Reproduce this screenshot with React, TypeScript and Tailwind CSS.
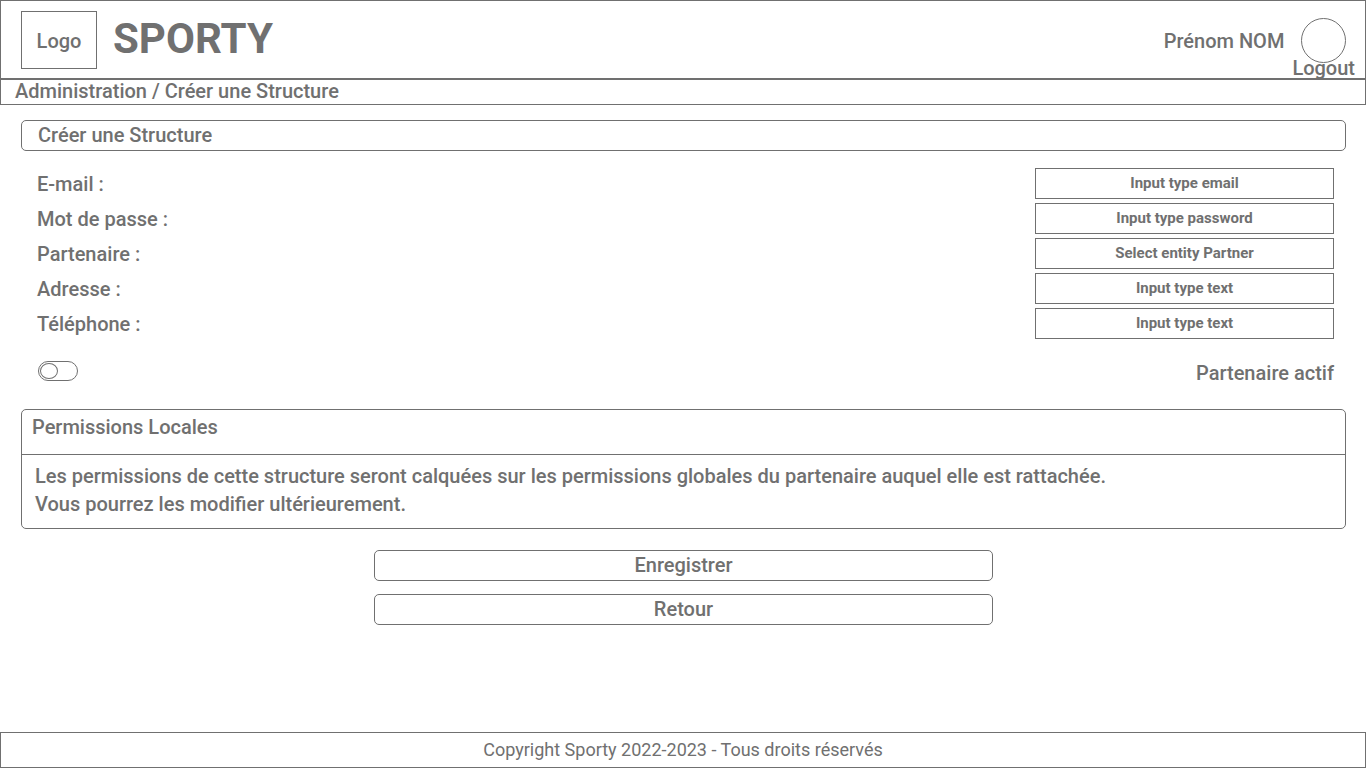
import React from "react";

type Field = { id: string; label: string; type: "email" | "password" | "select" | "text"; hint: string };

const fields: Field[] = [
  { id: "email", label: "E-mail :", type: "email", hint: "Input type email" },
  { id: "password", label: "Mot de passe :", type: "password", hint: "Input type password" },
  { id: "partner", label: "Partenaire :", type: "select", hint: "Select entity Partner" },
  { id: "address", label: "Adresse :", type: "text", hint: "Input type text" },
  { id: "phone", label: "Téléphone :", type: "text", hint: "Input type text" },
];

const control =
  "block h-[31px] w-[299px] appearance-none border border-[#707070] bg-white px-2 pb-0.5 text-center text-[15px] font-bold text-[#707070] placeholder:text-[#707070] placeholder:opacity-100";

function FieldRow({ field }: { field: Field }) {
  return (
    <div className="flex items-center justify-between">
      <label htmlFor={field.id}>{field.label}</label>
      {field.type === "select" ? (
        <select id={field.id} className={control}>
          <option>{field.hint}</option>
        </select>
      ) : (
        <input id={field.id} type={field.type} placeholder={field.hint} className={control} />
      )}
    </div>
  );
}

export default function App() {
  return (
    <div className="flex min-h-screen flex-col bg-white font-['Roboto',sans-serif] text-xl leading-7 font-medium text-[#707070]">
      <header className="flex h-[79px] items-start justify-between border border-[#707070] pr-[10px] pl-5">
        <div className="flex items-start gap-4">
          <div className="mt-[10px] flex h-[58px] w-[76px] items-center justify-center border border-[#707070] pt-0.5">
            Logo
          </div>
          <h1 className="mt-[14px] text-[42px] leading-[48px] font-bold">SPORTY</h1>
        </div>
        <div className="flex items-start gap-2">
          <span className="mt-[26px]">Prénom NOM</span>
          <div className="flex flex-col items-center pt-[17px]">
            <div className="h-[45px] w-[45px] rounded-full border border-[#707070]" />
            <a href="#logout" className="-mt-[9px]">
              Logout
            </a>
          </div>
        </div>
      </header>

      <nav aria-label="Fil d'Ariane" className="flex h-[26px] items-center border border-[#707070] px-[14px] pb-0.5">
        Administration / Créer une Structure
      </nav>

      <main className="flex flex-1 flex-col px-5 pt-[15px] pl-[21px]">
        <h2 className="flex h-[31px] items-center rounded-[5px] border border-[#707070] px-4 pb-0.5">
          Créer une Structure
        </h2>

        <form className="flex flex-col" onSubmit={(e) => e.preventDefault()}>
          <div className="mt-[17px] flex flex-col gap-1 pr-3 pl-4">
            {fields.map((field) => (
              <FieldRow key={field.id} field={field} />
            ))}
          </div>

          <div className="mt-5 flex items-start justify-between pr-3 pl-[17px]">
            <input
              id="active"
              type="checkbox"
              role="switch"
              className="mt-0.5 flex h-5 w-10 appearance-none items-center rounded-full border border-[#707070] px-px before:block before:h-4 before:w-[18px] before:rounded-[50%] before:border before:border-[#707070] before:content-[''] checked:justify-end"
            />
            <label htmlFor="active">Partenaire actif</label>
          </div>

          <section className="mt-[22px] rounded-[5px] border border-[#707070]">
            <h3 className="h-[45px] border-b border-[#707070] px-[10px] pt-[3px]">Permissions Locales</h3>
            <p className="px-[13px] pt-[7px] pb-[10px]">
              Les permissions de cette structure seront calquées sur les permissions globales du partenaire auquel elle
              est rattachée.
              <br />
              Vous pourrez les modifier ultérieurement.
            </p>
          </section>

          <div className="mx-auto mt-[21px] flex w-[619px] max-w-full flex-col gap-[13px]">
            <button type="submit" className="flex h-[31px] items-center justify-center rounded-[5px] border border-[#707070] pb-0.5">
              Enregistrer
            </button>
            <button type="button" className="flex h-[31px] items-center justify-center rounded-[5px] border border-[#707070] pb-0.5">
              Retour
            </button>
          </div>
        </form>
      </main>

      <footer className="flex h-9 items-center justify-center border border-[#707070] text-lg font-normal">
        Copyright Sporty 2022-2023 - Tous droits réservés
      </footer>
    </div>
  );
}
